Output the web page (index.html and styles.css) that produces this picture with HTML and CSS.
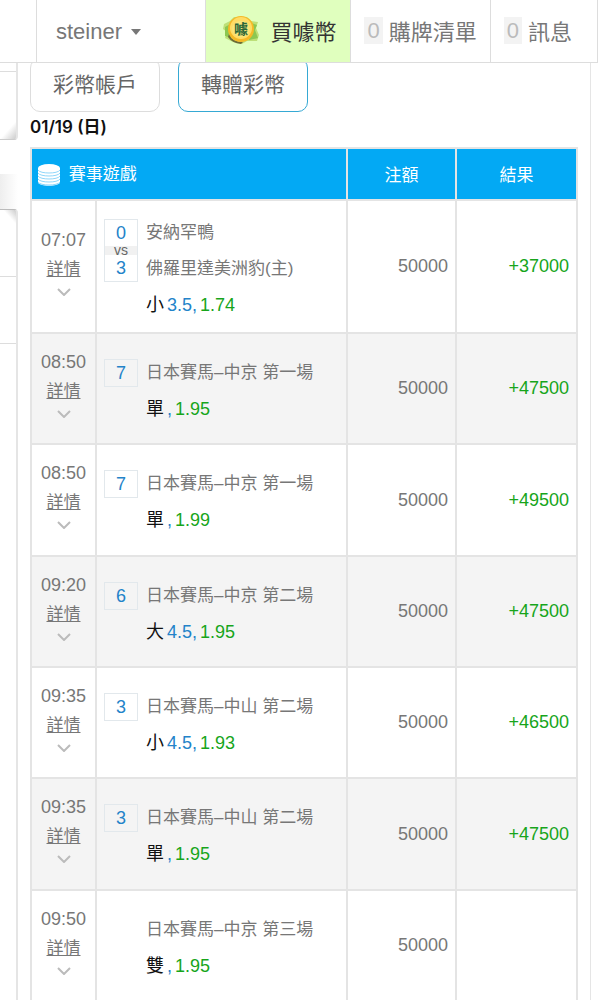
FILE: index.html
```
<!DOCTYPE html>
<html lang="zh-Hant">

<head>
    <meta charset="UTF-8">
    <meta name="viewport" content="width=device-width, initial-scale=1.0">
    <title>彩幣帳戶</title>
    <link rel="stylesheet" href="styles.css">
</head>

<body>
    <header class="topbar">
        <div class="edge"></div>
        <button class="user" type="button">steiner <span class="caret"></span></button>
        <a class="buy" href="#">
            <svg class="coin" viewBox="0 0 38 32" aria-hidden="true">
                <path d="M2 10L8 7L12 3L25 3L29 7L36 8L34 14L37 21L35 27L25 27L20 30L11 28L3 24L5 18L1 15Z" fill="#bde078" />
                <path d="M3 13L12 8L9 24L3 22ZM27 8L35 11L33 16L36 24L27 26Z" fill="#8cc751" />
                <path d="M7 20Q10 28 21 28L19 30Q10 29 6 23Z" fill="#6c6b38" />
                <ellipse cx="19" cy="15" rx="13" ry="13" fill="#f5b927" />
                <ellipse cx="19" cy="14" rx="11" ry="11" fill="#ffdc65" />
                <ellipse cx="19" cy="15" rx="9" ry="8" fill="#f8e57b" />
                <text x="19" y="20" text-anchor="middle" class="coin-text">噱</text>
            </svg>
            買噱幣
        </a>
        <a class="nav" href="#"><span class="count">0</span>購牌清單</a>
        <a class="nav" href="#"><span class="count">0</span>訊息</a>
    </header>

    <div class="page">
        <aside class="side">
            <div class="side-top"></div>
            <div class="side-gap"></div>
            <div class="side-menu">
                <div class="side-item"></div>
                <div class="side-item"></div>
            </div>
        </aside>
        <main class="panel">
            <nav class="tabs">
                <a class="tab" href="#">彩幣帳戶</a>
                <a class="tab active" href="#">轉贈彩幣</a>
            </nav>
            <h2 class="date">01/19 (日)</h2>
            <table class="bets">
                <colgroup>
                    <col class="col-time">
                    <col>
                    <col class="col-stake">
                    <col class="col-result">
                </colgroup>
                <thead>
                    <tr>
                        <th class="game-head" colspan="2">
                            <svg class="coins" viewBox="0 0 22 22" aria-hidden="true">
                                <path d="M0 4V18C0 23 22 23 22 18V4Z" fill="#fff" />
                                <path d="M0 6C2 10 20 10 22 6M0 9C2 13 20 13 22 9M0 12C2 16 20 16 22 12M0 15C2 19 20 19 22 15M0 18C2 22 20 22 22 18" fill="none" stroke="#8fd7fa" />
                                <ellipse cx="11" cy="4" rx="11" ry="4" fill="#fff" />
                            </svg>
                            賽事遊戲
                        </th>
                        <th>注額</th>
                        <th>結果</th>
                    </tr>
                </thead>
                <tbody>
                    <tr class="versus">
                        <td class="time">07:07<a href="#">詳情</a><svg class="chevron" viewBox="0 0 14 8"><path d="M1 1L7 7L13 1" /></svg></td>
                        <td>
                            <div class="match">
                                <div class="score"><span class="num">0</span><span class="vs">vs</span><span class="num">3</span></div>
                                <div class="teams">安納罕鴨<br>佛羅里達美洲豹(主)</div>
                                <div class="pick">小 <span class="line">3.5,</span> <span class="odds">1.74</span></div>
                            </div>
                        </td>
                        <td class="stake">50000</td>
                        <td class="result">+37000</td>
                    </tr>
                    <tr>
                        <td class="time">08:50<a href="#">詳情</a><svg class="chevron" viewBox="0 0 14 8"><path d="M1 1L7 7L13 1" /></svg></td>
                        <td>
                            <div class="match">
                                <div class="score"><span class="num">7</span></div>
                                <div class="teams">日本賽馬–中京 第一場</div>
                                <div class="pick">單 <span class="line">,</span> <span class="odds">1.95</span></div>
                            </div>
                        </td>
                        <td class="stake">50000</td>
                        <td class="result">+47500</td>
                    </tr>
                    <tr>
                        <td class="time">08:50<a href="#">詳情</a><svg class="chevron" viewBox="0 0 14 8"><path d="M1 1L7 7L13 1" /></svg></td>
                        <td>
                            <div class="match">
                                <div class="score"><span class="num">7</span></div>
                                <div class="teams">日本賽馬–中京 第一場</div>
                                <div class="pick">單 <span class="line">,</span> <span class="odds">1.99</span></div>
                            </div>
                        </td>
                        <td class="stake">50000</td>
                        <td class="result">+49500</td>
                    </tr>
                    <tr>
                        <td class="time">09:20<a href="#">詳情</a><svg class="chevron" viewBox="0 0 14 8"><path d="M1 1L7 7L13 1" /></svg></td>
                        <td>
                            <div class="match">
                                <div class="score"><span class="num">6</span></div>
                                <div class="teams">日本賽馬–中京 第二場</div>
                                <div class="pick">大 <span class="line">4.5,</span> <span class="odds">1.95</span></div>
                            </div>
                        </td>
                        <td class="stake">50000</td>
                        <td class="result">+47500</td>
                    </tr>
                    <tr>
                        <td class="time">09:35<a href="#">詳情</a><svg class="chevron" viewBox="0 0 14 8"><path d="M1 1L7 7L13 1" /></svg></td>
                        <td>
                            <div class="match">
                                <div class="score"><span class="num">3</span></div>
                                <div class="teams">日本賽馬–中山 第二場</div>
                                <div class="pick">小 <span class="line">4.5,</span> <span class="odds">1.93</span></div>
                            </div>
                        </td>
                        <td class="stake">50000</td>
                        <td class="result">+46500</td>
                    </tr>
                    <tr>
                        <td class="time">09:35<a href="#">詳情</a><svg class="chevron" viewBox="0 0 14 8"><path d="M1 1L7 7L13 1" /></svg></td>
                        <td>
                            <div class="match">
                                <div class="score"><span class="num">3</span></div>
                                <div class="teams">日本賽馬–中山 第二場</div>
                                <div class="pick">單 <span class="line">,</span> <span class="odds">1.95</span></div>
                            </div>
                        </td>
                        <td class="stake">50000</td>
                        <td class="result">+47500</td>
                    </tr>
                    <tr>
                        <td class="time">09:50<a href="#">詳情</a><svg class="chevron" viewBox="0 0 14 8"><path d="M1 1L7 7L13 1" /></svg></td>
                        <td>
                            <div class="match">
                                <div class="teams">日本賽馬–中京 第三場</div>
                                <div class="pick">雙 <span class="line">,</span> <span class="odds">1.95</span></div>
                            </div>
                        </td>
                        <td class="stake">50000</td>
                        <td class="result"></td>
                    </tr>
                </tbody>
            </table>
        </main>
    </div>
</body>

</html>
```
FILE: styles.css
```
* {
    box-sizing: border-box;
}

html {
    scrollbar-width: none;
}

body {
    margin: 0;
    background: #fff;
    color: #777;
    font-family: "Liberation Sans", "Noto Sans CJK TC", sans-serif;
    font-size: 18px;
}

a {
    color: inherit;
    text-decoration: none;
}

.topbar {
    position: sticky;
    top: 0;
    z-index: 10;
    display: flex;
    height: 63px;
    background: #fff;
    border-bottom: 1px solid #ddd;
    font-size: 22px;
}

.edge {
    width: 37px;
    border-right: 1px solid #ddd;
}

.user,
.buy,
.nav {
    display: flex;
    align-items: center;
    border-right: 1px solid #ddd;
    white-space: nowrap;
}

.user {
    flex: 1;
    gap: 9px;
    padding: 2px 19px 0;
    border-width: 0 1px 0 0;
    background: none;
    color: #777;
    font: inherit;
}

.caret {
    border: 5px solid transparent;
    border-top: 6px solid #777;
    border-bottom: 0;
}

.buy {
    gap: 10px;
    padding: 0 14px 2px 16px;
    background: #e0ffbe;
    color: #333;
}

.coin {
    width: 38px;
    height: 32px;
}

.coin-text {
    fill: #2c6538;
    font-size: 14px;
    font-weight: bold;
}

.nav {
    gap: 6px;
    padding: 0 13px 2px;
}

.nav:last-child {
    padding-right: 25px;
}

.count {
    padding: 0 3px;
    background: #f3f3f3;
    color: #bbb;
    line-height: 27px;
}

.page {
    display: flex;
}

.side {
    width: 18px;
    overflow: hidden;
}

.side-top {
    height: 77px;
    border-right: 2px solid #e5e5e5;
    border-bottom: 1px solid #ccc;
    border-radius: 0 0 4px 0;
    background: linear-gradient(#ddd, #ddd) 0 8px / 100% 1px no-repeat, linear-gradient(to bottom right, #fff 50%, #ccc) 0 100% / 100% 18px no-repeat;
}

.side-gap {
    height: 69px;
    background: linear-gradient(to right, #eee, transparent) 0 34px / 100% 35px no-repeat;
}

.side-menu {
    height: calc(100% - 146px);
    border-top: 1px solid #bbb;
    border-right: 2px solid #e5e5e5;
    border-radius: 0 4px 0 0;
    background: linear-gradient(to top right, #fff 60%, #ccc) 0 0 / 100% 18px no-repeat;
}

.side-item {
    height: 67px;
    border-bottom: 1px solid #ddd;
}

.panel {
    flex: 1;
    margin-right: 7px;
    padding: 0 12px;
    border-right: 1px solid #e5e5e5;
}

.tabs {
    display: flex;
    gap: 18px;
    margin-top: -5px;
}

.tab {
    padding: 0 22px;
    border: 1px solid #ddd;
    border-radius: 10px;
    color: #666;
    font-size: 21px;
    line-height: 52px;
}

.tab.active {
    border-color: #36a9d4;
}

.date {
    margin: 0;
    color: #111;
    font-family: Inter, "Noto Sans CJK TC", sans-serif;
    font-size: 17px;
    font-weight: 600;
    line-height: 30px;
    height: 35px;
}

.bets {
    width: 100%;
    table-layout: fixed;
    border-collapse: collapse;
}

.bets th,
.bets td {
    padding: 0 7px;
    border: 2px solid #e4e4e4;
}

.bets th {
    padding: 0 6px 2px;
}

.col-time {
    width: 65px;
}

.col-stake {
    width: 109px;
}

.col-result {
    width: 121px;
}

.bets th {
    height: 52px;
    background: #03a9f4;
    color: #fff;
    font-size: 17px;
    font-weight: normal;
}

.bets .game-head {
    text-align: left;
}

.coins {
    width: 22px;
    height: 22px;
    margin-right: 4px;
    vertical-align: middle;
}

.bets tbody tr {
    height: 111px;
}

.bets tbody tr:nth-child(3n) {
    height: 112px;
}

.bets tbody .versus {
    height: 133px;
}

.bets tbody tr:nth-child(even) {
    background: #f4f4f4;
}

.bets .time {
    padding: 0 0 10px;
    line-height: 29px;
    text-align: center;
}

.time a {
    display: block;
    font-size: 17px;
    text-decoration: underline;
}

.chevron {
    display: block;
    width: 14px;
    height: 8px;
    margin: 4px auto 2px;
    fill: none;
    stroke: #bbb;
    stroke-width: 2;
}

.match {
    display: grid;
    grid-template-columns: 34px 1fr;
    align-items: center;
    column-gap: 8px;
    padding-top: 5px;
}

.score {
    border: 1px solid #e2e8ec;
    color: #2383c9;
    text-align: center;
}

.num,
.vs {
    display: block;
}

.num {
    line-height: 26px;
}

.vs {
    background: #f1f1f1;
    color: #666;
    font-size: 14px;
    line-height: 9px;
}

.teams,
.pick {
    grid-column: 2;
    white-space: nowrap;
}

.teams {
    font-size: 17px;
    line-height: 36px;
}

.pick {
    display: flex;
    gap: 3px;
    color: #111;
    line-height: 37px;
}

.line {
    color: #2383c9;
}

.odds,
.bets .result {
    color: #17a51b;
}

.stake,
.result {
    text-align: right;
}
```
